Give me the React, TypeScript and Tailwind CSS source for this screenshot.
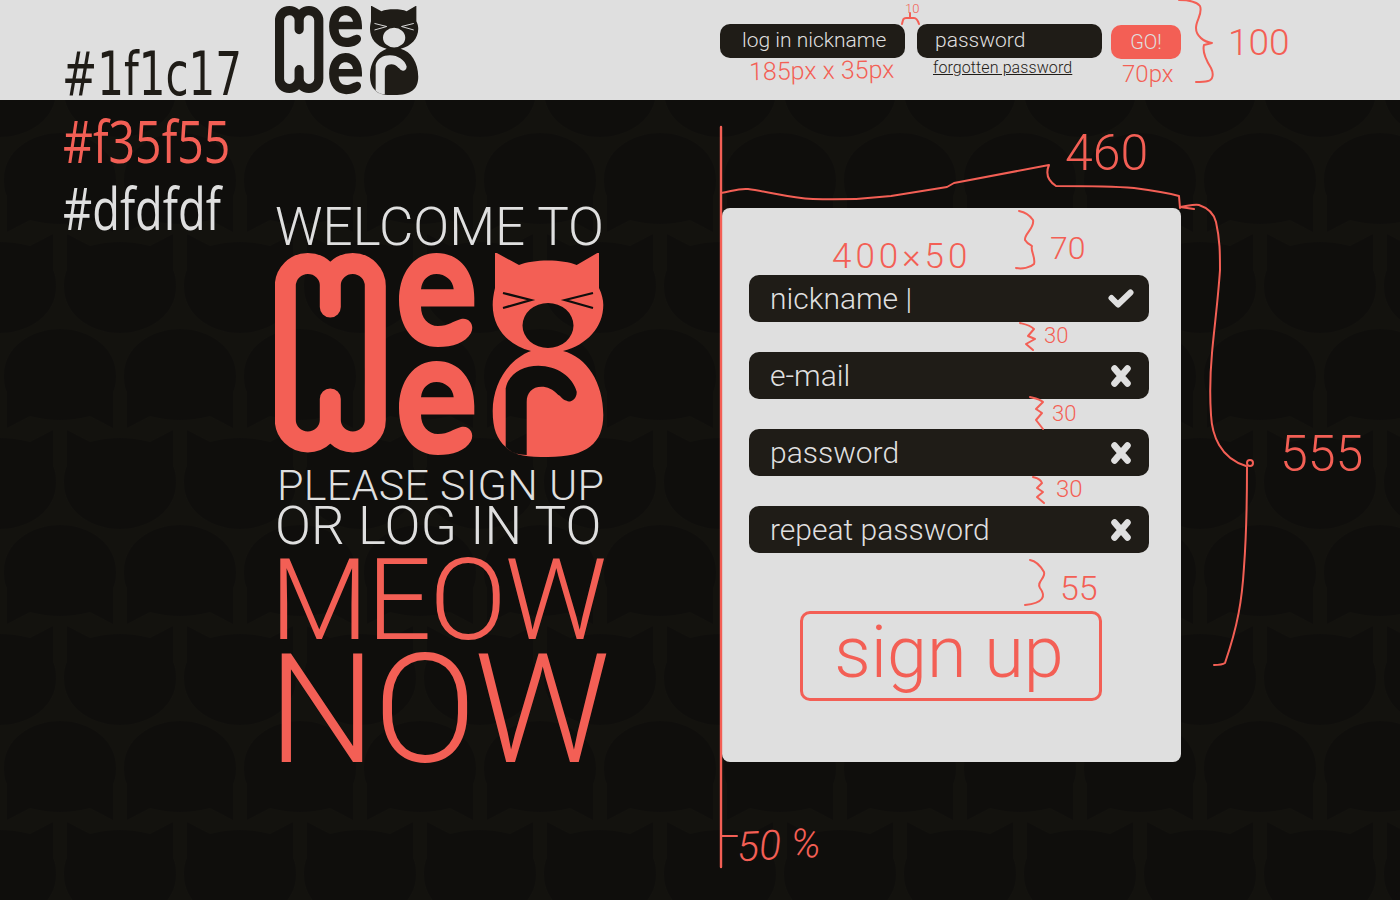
function Logo({ className, cut }: { className: string; cut: string }) {
  const e =
    'M199.3 53.5V45C199.3 18 184 0 161.5 0C139 0 124 20 124 47C124 75 139 94 163 94C178 94 190 90 196 80C200 72 194 64 186 66C178 68 174 73 163 73C153 73 146 65 146 53.5ZM146 36.3C147 27 153 21 161.5 21C170 21 178 27 178.7 36.3Z';
  return (
    <svg viewBox="0 0 330 204" className={className} fill="currentColor">
      {/* m / w block */}
      <path
        d="M55.3 54V32A22.5 21.5 0 0 0 32.8 10.5A22.5 22.5 0 0 0 10.3 33V167A22.5 22 0 0 0 32.8 189A22.5 22 0 0 0 55.3 167V146M55.3 54V32A22.5 21.5 0 0 1 77.8 10.5A22.5 22.5 0 0 1 100.3 33V167A22.5 22 0 0 1 77.8 189A22.5 22 0 0 1 55.3 167V146"
        fill="none"
        stroke="currentColor"
        strokeWidth="21"
        strokeLinecap="round"
      />
      <path fillRule="evenodd" d={e} />
      <path fillRule="evenodd" transform="translate(0 108)" d={e} />
      {/* cat */}
      <path
        fillRule="evenodd"
        d="M220 -1L244 12C258 6 288 6 301.7 12L324 -1V35C327 41 328.3 47 328.3 52C328.3 74 312 92 288 98C312 104 328.3 130 328.3 162C328.3 190 312 204 273 204C250 204 238 202 230.7 194C222 186 217.7 176 217.7 158C217.7 130 234 106 256 98C232 92 217.7 74 217.7 52C217.7 47 218.5 41 220 35ZM298.5 72.500A25.500 22.500 0 1 1 247.500 72.500A25.500 22.500 0 1 1 298.500 72.500ZM230.700 193.700V135.300C234 120 248 112.700 263.300 112.700C282 112.700 298 124 301.700 138.700C302 147 294 150 291.700 147.700C287 147 285 142 283.300 142C278 136 272 133.700 266.700 133.700C257 133.700 251.700 140 251.700 148.700V202C242 202 235 199 230.700 193.700Z"
      />
      <path d="M228 40L256 47L228 55M318 40L290 47L318 55" fill="none" stroke={cut} strokeWidth="2.2" />
    </svg>
  );
}

function CatPattern() {
  const head =
    'M-53 0L-30 12Q0 4 30 12L53 0V36C56 42 56 48 56 53C56 80 30 99 0 99C-30 99 -56 80 -56 53C-56 48 -56 42 -53 36Z';
  return (
    <svg className="absolute inset-0 h-full w-full">
      <defs>
        <pattern id="cats" x="0" y="130" width="120" height="196" patternUnits="userSpaceOnUse">
          <path d={head} fill="#0f0e0c" transform="translate(0 4)" />
          <path d={head} fill="#0f0e0c" transform="translate(120 4)" />
          <path d={head} fill="#0f0e0c" transform="translate(60 198) scale(1 -1)" />
          <path d={head} fill="#0f0e0c" transform="translate(60 2) scale(1 -1)" />
        </pattern>
      </defs>
      <rect width="100%" height="100%" fill="url(#cats)" />
    </svg>
  );
}

function CheckMark() {
  return (
    <svg viewBox="0 0 26 19" className="h-[19px] w-[26px]" fill="none" stroke="currentColor" strokeWidth="6" strokeLinecap="round" strokeLinejoin="round">
      <path d="M3.500 9L10 15.500L22.500 3.500" />
    </svg>
  );
}

function CrossMark() {
  return (
    <svg viewBox="0 0 20 22" className="mr-[3px] h-[22px] w-[20px]" fill="none" stroke="currentColor" strokeWidth="6.500" strokeLinecap="round">
      <path d="M3.500 3.500L16.500 18.500M16.500 3.500L3.500 18.500" />
    </svg>
  );
}

function Field({ label, ok }: { label: string; ok?: boolean }) {
  return (
    <div className="flex h-[47px] w-[400px] items-center justify-between rounded-[10px] bg-[#1f1c17] pl-[21px] pr-[15px] text-[30px] font-light text-[#dfdfdf]">
      <span>{label}</span>
      {ok ? <CheckMark /> : <CrossMark />}
    </div>
  );
}

// hand drawn marks on top of the mockup
function Scribbles() {
  return (
    <svg className="pointer-events-none absolute inset-0 h-full w-full" fill="none" stroke="#f35f55" strokeWidth="2" strokeLinejoin="round" strokeLinecap="round">
      <path strokeWidth="2.4" d="M721 127V867" />
      <path d="M721 836H737" />
      <path d="M721 193C730 192 738 188 748 189C770 192 790 198 813 199C840 200 865 199 891 196L947 187L954 183L1049 165C1046 172 1047 180 1056 186C1085 186 1110 186 1134 188C1150 190 1165 192 1179 196L1180 208" />
      <path d="M1180 207L1194 209M1180 207C1188 206 1194 204 1199 205C1208 208 1214 214 1216 222C1220 240 1220 253 1220 270C1218 300 1214 330 1212 353C1210 375 1210 400 1211 415C1212 435 1220 458 1246 466" />
      <circle cx="1250" cy="463" r="3" />
      <path d="M1247 467C1247 500 1246 540 1244 567C1242 600 1238 625 1225 663C1222 665 1218 665 1214 665" />
      <path d="M1179 0C1188 0 1196 1 1200 6C1203 14 1196 20 1196 28C1196 36 1204 42 1212 43L1204 45C1202 52 1206 60 1211 68C1214 74 1213 80 1208 81C1204 82 1200 82 1196 82" />
      <path d="M902 24C903 20 903 18 906 18H910V13M910 18H914C917 18 918 21 919 24" />
      <path d="M1019 211C1024 212 1029 214 1033 220C1035 228 1024 234 1025 240C1028 245 1032 245 1032 246C1030 250 1036 258 1034 264C1030 268 1022 269 1016 268" />
      <path d="M1020 323C1024 324 1030 325 1034 329L1028 336L1035 339L1026 344L1033 350" />
      <path d="M1030 397C1034 398 1040 399 1043 402L1036 409L1042 413L1036 420L1043 429" />
      <path d="M1033 477C1036 478 1040 478 1042 483L1037 488L1043 492L1037 497L1044 503" />
      <path d="M1030 560C1036 561 1040 565 1044 572C1046 578 1036 582 1040 588C1046 596 1044 603 1025 605" />
    </svg>
  );
}

const noteClass = 'pointer-events-none absolute font-light text-[#f35f55]';

export default function App() {
  return (
    <div className="relative h-[900px] w-full overflow-hidden font-['Roboto',sans-serif]">
      <header className="flex h-[100px] bg-[#dfdfdf] text-[#1f1c17]">
        <div className="mb-[-7px] w-[275px] self-end pl-[62px]">
          <div className="origin-left scale-x-[0.7] whitespace-nowrap font-['DejaVu_Sans',sans-serif] text-[60px] leading-[66px] font-normal">#1f1c17</div>
        </div>
        <Logo className="mt-[6px] h-[89px] w-[144px]" cut="#dfdfdf" />
        <div className="ml-[301px] mt-[24px] flex items-start text-[21px] font-light">
          <div className="flex h-[34px] w-[185px] items-center rounded-[10px] bg-[#1f1c17] pl-[22px] text-[#dfdfdf]">log in nickname</div>
          <div className="ml-[12px] flex w-[185px] flex-col">
            <div className="flex h-[34px] items-center rounded-[10px] bg-[#1f1c17] pl-[18px] text-[#dfdfdf]">password</div>
            <a className="ml-[16px] text-[16px] leading-[20px] tracking-[0.1px] underline">forgotten password</a>
          </div>
          <div className="ml-[9px] mt-[1px] flex h-[34px] w-[70px] items-center justify-center rounded-[10px] bg-[#f35f55] text-[20px] text-[#dfdfdf]">GO!</div>
        </div>
      </header>

      <main className="relative flex h-[800px] bg-[#13120e]">
        <CatPattern />
        <div className="relative w-[275px] pl-[63px] pt-[5px]">
          <div className="origin-left scale-x-[0.8] font-['Open_Sans',sans-serif] text-[58px] leading-[72px] text-[#f35f55]">#f35f55</div>
          <div className="mt-[3px] origin-left scale-x-[0.78] font-['Open_Sans',sans-serif] text-[58px] leading-[56px] text-[#dfdfdf]">#dfdfdf</div>
        </div>
        <div className="relative w-[447px] font-light">
          <h1 className="mt-[97px] whitespace-nowrap text-[53px] leading-[60px] text-[#dfdfdf]">WELCOME TO</h1>
          <Logo className="mt-[-4px] h-[204px] w-[330px] text-[#f35f55]" cut="#0f0e0c" />
          <p className="ml-[2px] mt-[6px] whitespace-nowrap text-[43px] leading-[44px] tracking-[0.3px] text-[#dfdfdf]">PLEASE SIGN UP</p>
          <p className="mt-[-3px] whitespace-nowrap text-[53px] leading-[44px] tracking-[0.2px] text-[#dfdfdf]">OR LOG IN TO</p>
          <p className="ml-[-5px] whitespace-nowrap text-[114px] leading-[104px] tracking-[-2px] text-[#f35f55]">MEOW</p>
          <p className="ml-[-7px] mt-[-4px] whitespace-nowrap text-[152px] leading-[124px] tracking-[-2.5px] text-[#f35f55]">NOW</p>
        </div>
        <section className="relative mt-[108px] h-[554px] w-[459px] rounded-[8px] bg-[#dfdfdf] px-[27px] pt-[67px]">
          <div className="flex flex-col gap-[30px]">
            <Field label="nickname |" ok />
            <Field label="e-mail" />
            <Field label="password" />
            <Field label="repeat password" />
          </div>
          <button className="ml-[51px] mt-[58px] h-[90px] w-[302px] rounded-[10px] border-[3px] border-[#f35f55] pb-[6px] pr-[4px] text-[72px] leading-[78px] font-light text-[#f35f55]">sign up</button>
        </section>
      </main>

      <Scribbles />
      <span className={`${noteClass} left-[749px] top-[55px] rotate-[-1deg] whitespace-nowrap text-[25px] leading-[32px]`}>185px x 35px</span>
      <span className={`${noteClass} left-[905px] top-[1px] text-[13px] leading-[16px]`}>10</span>
      <span className={`${noteClass} left-[1122px] top-[60px] text-[24px] leading-[28px]`}>70px</span>
      <span className={`${noteClass} left-[1228px] top-[18px] text-[37px] leading-[50px]`}>100</span>
      <span className={`${noteClass} left-[1065px] top-[128px] text-[50px] leading-[50px]`}>460</span>
      <span className={`${noteClass} left-[832px] top-[236px] text-[35px] leading-[42px] tracking-[4px]`}>400×50</span>
      <span className={`${noteClass} left-[1050px] top-[226px] text-[32px] leading-[44px]`}>70</span>
      <span className={`${noteClass} left-[1044px] top-[324px] text-[22px] leading-[24px]`}>30</span>
      <span className={`${noteClass} left-[1052px] top-[402px] text-[22px] leading-[24px]`}>30</span>
      <span className={`${noteClass} left-[1056px] top-[476px] text-[24px] leading-[26px]`}>30</span>
      <span className={`${noteClass} left-[1060px] top-[567px] text-[34px] leading-[42px]`}>55</span>
      <span className={`${noteClass} left-[1280px] top-[426px] text-[50px] leading-[56px]`}>555</span>
      <span className={`${noteClass} left-[737px] top-[820px] rotate-[-3deg] whitespace-nowrap text-[41px] leading-[50px] italic`}>50 %</span>
    </div>
  );
}
